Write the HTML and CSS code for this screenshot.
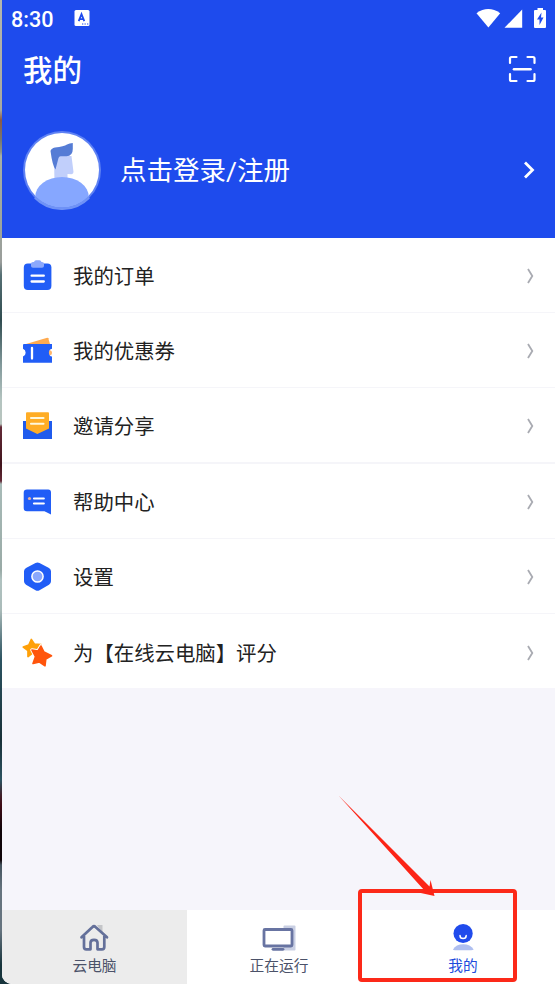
FILE: index.html
```html
<!DOCTYPE html>
<html lang="zh-CN">
<head>
<meta charset="utf-8">
<title>我的</title>
<link rel="stylesheet" href="styles.css">
</head>
<body>
<div class="phone">
  <header class="header">
    <div class="status">
      <span class="time">8:30</span>
      <svg class="status-app" width="16" height="16" viewBox="0 0 16 16"><rect x=".5" y="0" width="15" height="16" rx="1.500" fill="#fff"/><path d="M4.700 11.200 7.500 4.200 10.300 11.200M5.700 9.200h3.600" fill="none" stroke="#1e4bed" stroke-width="1.800"/><path d="M8 14h1.300M10.500 14h1.300M13 14h1.300" stroke="#1e4bed" stroke-width="1.200"/></svg>
      <svg class="status-icons" width="72" height="22" viewBox="476 7 72 22"><path d="M476.500 13.200Q488.200 4.800 500.200 13.200L488.400 27.400Z" fill="#fff"/><path d="M522.200 9.500V27.800H504.500Z" fill="#fff"/><path d="M537.500 8h5.500v2h2q1 0 1 1v16q0 1-1 1h-10q-1 0-1-1V11q0-1 1-1h2.500z" fill="#fff"/><path d="M541.500 12.500 537 19.500h2.500v5.500l4-7.500h-2.500z" fill="#1e4bed"/></svg>
    </div>
    <div class="title-row">
      <h1 class="title">我的</h1>
      <svg class="scan" width="28" height="28" viewBox="0 0 28 28" fill="none" stroke="#fff" stroke-width="2.200" stroke-linecap="round"><path d="M2 8V3.500Q2 2 3.500 2H8.500M19.500 2H25Q26.500 2 26.500 3.500V8M26.500 19V24.500Q26.500 26 25 26H19.500M8.500 26H3.500Q2 26 2 24.500V19"/><path d="M6 14.200H22.500" stroke-width="2.600"/></svg>
    </div>
    <div class="login">
      <svg class="avatar" width="80" height="80" viewBox="0 0 80 80">
        <defs><clipPath id="face"><circle cx="40" cy="40" r="37.500"/></clipPath></defs>
        <circle cx="40" cy="40" r="39" fill="#5f82f3"/>
        <circle cx="40" cy="40" r="37" fill="#fff"/>
        <g clip-path="url(#face)">
          <path d="M32 26H49.500L51.500 42Q51.500 44 49.500 44.300L45.500 44V54H32.500Z" fill="#c1cffb"/>
          <path d="M28.500 21Q29 18.500 33 17.500Q42 16.500 45 14.500Q47.500 13 50.800 13V19Q50.800 26 44.500 26.200H38.500Q37 26.200 36.500 28L33.500 39.500Q30.500 36 28.500 21Z" fill="#557cd5"/>
          <ellipse cx="40" cy="67" rx="26.800" ry="20" fill="#86a7ff"/>
        </g>
        <path d="M13 67.500A38 38 0 0 0 67 67.500" fill="none" stroke="#6f92f6" stroke-width="2.500"/>
      </svg>
      <span class="login-text">点击登录/注册</span>
      <svg class="login-arrow" width="14" height="20" viewBox="0 0 14 20"><path d="M3 2.500 10.500 10 3 17.500" fill="none" stroke="#fff" stroke-width="2.800"/></svg>
    </div>
  </header>

  <main class="menu">
    <div class="item">
      <svg class="icon" viewBox="0 0 32 32"><rect x="1.800" y="3.500" width="27.600" height="26.500" rx="4" fill="#215df6"/><path d="M9 3.500V6Q9 7.700 11 7.700H20Q22 7.700 22 6V3.500Q22 2 20 2H19.500Q19 .2 17.500 .2H14Q12.500 .2 12 2H11Q9 2 9 3.500Z" fill="#8ba8fc"/><path d="M9.600 15.700H21.800M9.600 21.500H21.800" stroke="#fff" stroke-width="2.300" stroke-linecap="round"/></svg>
      <span class="label">我的订单</span>
      <svg class="arrow" viewBox="0 0 9 18"><path d="M2 2 6.300 9 2 16" /></svg>
    </div>
    <div class="item">
      <svg class="icon" viewBox="0 0 32 32"><path d="M4 9 25.200 2.700Q26 2.500 26.300 3.300L28 9Z" fill="#ffaa4f"/><circle cx="27.500" cy="17.700" r="2.500" fill="#ffb56a"/><path d="M2 9H30V13.800A4 4 0 0 0 30 21.600V27.800H1V21.600A4.200 4.200 0 0 0 1 13.800V10Q1 9 2 9Z" fill="#215df6"/><path d="M10 13V23.500" stroke="#fff" stroke-width="2.300" stroke-linecap="round"/></svg>
      <span class="label">我的优惠券</span>
      <svg class="arrow" viewBox="0 0 9 18"><path d="M2 2 6.300 9 2 16" /></svg>
    </div>
    <div class="item">
      <svg class="icon" viewBox="0 0 32 32"><path d="M1 11H30V29H1Z" fill="#1f5bed"/><path d="M5 2.200H26Q27 2.200 27 3.200V18.500L15.300 24 4 18.500V3.200Q4 2.200 5 2.200Z" fill="#ffad25"/><path d="M9 8H21.500M9 13.800H21.500" stroke="#fff8dc" stroke-width="2.100" stroke-linecap="round"/></svg>
      <span class="label">邀请分享</span>
      <svg class="arrow" viewBox="0 0 9 18"><path d="M2 2 6.300 9 2 16" /></svg>
    </div>
    <div class="item">
      <svg class="icon" viewBox="0 0 32 32"><path d="M5 3.500H26.200Q29 3.500 29 6.500V28.500L22.500 25.300H5Q1.700 25.300 1.700 22V6.800Q1.700 3.500 5 3.500Z" fill="#215df6"/><circle cx="7.500" cy="12.500" r="1.600" fill="#e8b19d"/><path d="M12 12.500H21.800M12 17.500H21.800" stroke="#fff" stroke-width="2.200" stroke-linecap="round"/></svg>
      <span class="label">帮助中心</span>
      <svg class="arrow" viewBox="0 0 9 18"><path d="M2 2 6.300 9 2 16" /></svg>
    </div>
    <div class="item">
      <svg class="icon" viewBox="0 0 32 32"><path d="M13.500 2Q15.500 1 17.500 2L27 7Q29 8.200 29 10.300V20.300Q29 22.600 27 23.800L17.500 29.200Q15.500 30.400 13.500 29.200L4 23.800Q2 22.600 2 20.300V10.300Q2 8.200 4 7Z" fill="#215df6"/><circle cx="15.500" cy="15.500" r="5.600" fill="#8ba8fc" stroke="#fff" stroke-width="1.500"/></svg>
      <span class="label">设置</span>
      <svg class="arrow" viewBox="0 0 9 18"><path d="M2 2 6.300 9 2 16" /></svg>
    </div>
    <div class="item">
      <svg class="icon" viewBox="0 0 32 32" stroke-linejoin="round"><path d="M9.300 2.500 12.300 7 19 7.500 15.500 12.500 16 18 10.500 16 6 19.500 6 13.500 1.300 10 6.800 8Z" fill="#ffa008" stroke="#ffa008" stroke-width="1.700"/><path d="M19 9 22 15 29 18.800 23.800 22 23 28.500 17.500 24.800 11 26 13.500 19.500 10 13 16 14Z" fill="#ff550c" stroke="#fff" stroke-width="3.600"/><path d="M19 9 22 15 29.500 18.800 23.800 22 23 28.800 17.500 25 11 26.500 13.500 19.500 10 13 16 14Z" fill="#ff550c" stroke="#ff550c" stroke-width="1.600"/></svg>
      <span class="label">为【在线云电脑】评分</span>
      <svg class="arrow" viewBox="0 0 9 18"><path d="M2 2 6.300 9 2 16" /></svg>
    </div>
  </main>

  <nav class="tabs">
    <div class="tab pressed">
      <svg class="tab-icon" viewBox="0 0 42 30"><path d="M23 3H28.500V11Z" fill="#c4c5c8"/><path d="M7.500 15.300 18.500 5Q20 3.500 21.500 5L33 15.300M10 14V25Q10 27.300 12.300 27.300H16.500V20.800Q16.500 17.800 20 17.800T23.500 20.800V27.300H28Q30.300 27.300 30.300 25V14" fill="none" stroke="#64709a" stroke-width="2.700" stroke-linecap="round" stroke-linejoin="round"/></svg>
      <span>云电脑</span>
    </div>
    <div class="tab">
      <svg class="tab-icon" viewBox="0 0 42 30"><rect x="25.500" y="3.500" width="12" height="25" rx="1" fill="#c9cfe3"/><rect x="6" y="7.500" width="28" height="16.500" rx="1" fill="#fff" stroke="#6874a2" stroke-width="2.800"/><path d="M15 27.300H25" stroke="#6874a2" stroke-width="2.800" stroke-linecap="round"/></svg>
      <span>正在运行</span>
    </div>
    <div class="tab active">
      <svg class="tab-icon" viewBox="0 0 42 30"><circle cx="21.100" cy="11.500" r="9.600" fill="#204bec"/><path d="M18 13.500Q18 16.600 21.100 16.600T24.200 13.500" fill="none" stroke="#fff" stroke-width="1.500" stroke-linecap="round"/><path d="M11 27.500Q14 22.200 21.200 22.200T31.700 27.500Q31 28.300 29 28.300H13Q11 28.300 11 27.500Z" fill="#afbff0"/></svg>
      <span>我的</span>
    </div>
  </nav>
</div>
<svg class="annotation" width="180" height="194" viewBox="338 790 180 194"><rect x="360" y="891" width="155" height="89" rx="2" fill="none" stroke="#fc2919" stroke-width="4"/><path d="M338.500 795.500 429.500 886.500 430.500 880 434.500 896 418.500 892.500 424.500 890.500Z" fill="#fc2416"/></svg>
</body>
</html>
```
FILE: styles.css
```css
* {
  box-sizing: border-box;
}

body {
  margin: 0;
  height: 984px;
  overflow: hidden;
  padding-left: 2px;
  font-family: Roboto, "Noto Sans CJK SC", sans-serif;
  background: linear-gradient(#b4b6ae 0, #a9a99e 110px, #8b5a45 120px, #777870 140px, #8f9488 152px, #a8b0a4 156px, #9ca39b 235px, #9a9d9b 262px, #567074 275px, #304c50 320px, #82999b 365px, #b4c4c0 400px, #b8c4be 424px, #642b38 427px, #40141c 465px, #642b38 481px, #a8bbb8 484px, #99aaa6 570px, #b0c2c0 580px, #aabbb9 610px, #4d6e78 645px, #2c5361 660px, #183038 740px, #2c5361 780px, #40202a 795px, #400b16 805px, #100509 830px, #100509 860px, #45545f 865px, #66747f 890px, #66747f 930px, #17343c 965px, #17343c 984px);
}

.phone {
  display: flex;
  flex-direction: column;
  height: 984px;
  background: #f6f5fb;
  border-bottom-left-radius: 10px;
  overflow: hidden;
}

.header {
  height: 238px;
  flex: none;
  background: #1e4bed;
  color: #fff;
}

.status {
  display: flex;
  align-items: center;
  height: 38px;
  padding: 0 7px 0 9px;
}

.time {
  width: 63px;
  font-size: 21.600px;
  font-weight: 500;
  line-height: 38px;
  padding-top: 1px;
}

.status-app {
  margin-top: -2px;
}

.status-icons {
  margin-left: auto;
  margin-top: -2px;
}

.title-row {
  display: flex;
  align-items: center;
  justify-content: space-between;
  height: 64px;
  padding: 0 19px 0 21px;
}

.title {
  margin: 0;
  padding-top: 2px;
  font-size: 29.500px;
  font-weight: 500;
  line-height: 40px;
}

.scan {
  margin-bottom: 2px;
}

.login {
  display: flex;
  align-items: center;
  height: 136px;
  padding: 0 19px 0 20px;
}

.avatar {
  margin-bottom: 1px;
}

.login-text {
  margin-left: 18px;
  padding-top: 2px;
  font-size: 26.500px;
  line-height: 36px;
}

.login-arrow {
  margin-left: auto;
}

.menu {
  flex: none;
  height: 450px;
  display: grid;
  grid-template-rows: 75px 75px 76px 75px 75px 74px;
  background: #fff;
}

.item {
  display: flex;
  align-items: center;
  padding: 1px 20px 0;
  border-bottom: 1px solid #f5f5f9;
  color: #222;
  font-size: 20.400px;
}

.item:nth-child(3) {
  border-bottom-width: 2px;
}

.item:last-child {
  padding-top: 3px;
  border-bottom: 0;
}

.icon {
  width: 32px;
  height: 32px;
  margin-top: 1px;
}

.label {
  margin-left: 19px;
  padding-top: 3px;
  line-height: 30px;
}

.arrow {
  width: 9px;
  height: 18px;
  margin-left: auto;
  fill: none;
  stroke: #a9abb2;
  stroke-width: 1.800;
}

.tabs {
  display: grid;
  grid-template-columns: 185px 184px 184px;
  height: 74px;
  margin-top: auto;
  background: #fff;
}

.tab {
  display: flex;
  flex-direction: column;
  align-items: center;
  padding-top: 12px;
  color: #4b5269;
  font-size: 14.700px;
  line-height: 22px;
}

.tab-icon {
  width: 42px;
  height: 30px;
  margin-bottom: 3px;
}

.pressed {
  background: #ececec;
}

.active {
  color: #204bdc;
}

.annotation {
  position: absolute;
  left: 338px;
  top: 790px;
}
```
